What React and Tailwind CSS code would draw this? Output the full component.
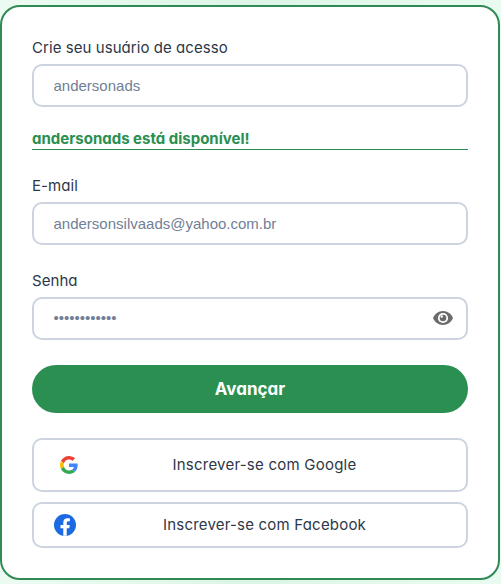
import React from "react";

const label = "block h-6 text-[15px] leading-6 tracking-[0.06px] text-[#2d3748]";
const input =
  "block h-[43px] w-full rounded-[10px] border-2 border-[#cdd4e0] bg-white pr-5 pl-[19.5px] font-['Liberation_Sans',Arial,sans-serif] text-[15px] text-[#718096] outline-none";

function EyeIcon() {
  return (
    <svg className="mb-0.5 h-[14px] w-5" viewBox="0 0 20 14" fill="none">
      <path d="M10 0C5.200 0 1.700 3 0 7c1.700 4 5.200 7 10 7s8.300-3 10-7c-1.700-4-5.200-7-10-7Z" fill="#6b6b6b" />
      <circle cx="10" cy="7" r="5.100" fill="#fff" />
      <circle cx="10" cy="7" r="3.300" fill="#6b6b6b" />
      <circle cx="8.700" cy="5.500" r="1.200" fill="#fff" />
    </svg>
  );
}

function GoogleIcon() {
  return (
    <svg className="size-[18px]" viewBox="0 0 48 48">
      <path fill="#EA4335" d="M24 9.5c3.540 0 6.710 1.220 9.210 3.600l6.850-6.850C35.900 2.380 30.470 0 24 0 14.620 0 6.510 5.380 2.560 13.220l7.980 6.190C12.430 13.720 17.740 9.500 24 9.500z" />
      <path fill="#4285F4" d="M46.980 24.550c0-1.570-.150-3.090-.380-4.550H24v9.020h12.940c-.580 2.960-2.260 5.480-4.780 7.180l7.730 6c4.510-4.180 7.090-10.360 7.090-17.650z" />
      <path fill="#FBBC05" d="M10.530 28.590c-.480-1.450-.760-2.990-.760-4.590s.270-3.140.760-4.590l-7.980-6.190C.920 16.460 0 20.120 0 24c0 3.880.920 7.540 2.560 10.780l7.970-6.190z" />
      <path fill="#34A853" d="M24 48c6.480 0 11.930-2.130 15.890-5.810l-7.730-6c-2.150 1.450-4.920 2.300-8.160 2.300-6.260 0-11.570-4.220-13.470-9.910l-7.980 6.190C6.510 42.620 14.620 48 24 48z" />
    </svg>
  );
}

function FacebookIcon() {
  return (
    <svg className="size-[22px]" viewBox="0 0 24 24">
      <circle cx="12" cy="12" r="12" fill="#1b6ae4" />
      <path fill="#fff" d="M10.125 23.860v-8.390H7.080V12h3.050V9.360c0-3.010 1.790-4.670 4.530-4.670 1.310 0 2.680.240 2.680.240v2.950h-1.510c-1.490 0-1.960.930-1.960 1.870V12h3.330l-.530 3.470h-2.800v8.390z" />
    </svg>
  );
}

export default function App() {
  return (
    <div className="h-[584px] w-[501px] bg-linear-to-r from-[#ecfbf2] via-[#dcf5e6] to-[#e9fbf0] pt-[5px] font-[Inter,'Open_Sans',sans-serif] [font-feature-settings:'cv11']">
      <form className="h-[575px] w-[500px] rounded-[20px] border-2 border-[#2f8a55] bg-white px-[30px] pt-[29px]">
        <label className={label} htmlFor="user">Crie seu usuário de acesso</label>
        <input id="user" className={input + " mt-[4px]"} defaultValue="andersonads" />
        <p className="mt-5 h-[23px] border-b border-solid border-b-[#2f8a55] text-[15px] leading-6 font-bold text-[#2a8f50]">
          andersonads está disponível!
        </p>

        <label className={label + " mt-6"} htmlFor="mail">E-mail</label>
        <input id="mail" className={input + " mt-[4px]"} defaultValue="andersonsilvaads@yahoo.com.br" />

        <label className={label + " mt-6"} htmlFor="pass">Senha</label>
        <div className="mt-[4px] flex h-[43px] items-center justify-between rounded-[10px] border-2 border-[#cdd4e0] pr-[13px] pl-[19.5px] font-['Liberation_Sans',Arial,sans-serif] text-[15px] text-[#718096]">
          <input id="pass" type="password" className="w-60 outline-none" defaultValue="andersonads1" />
          <EyeIcon />
        </div>

        <button type="button" className="mt-[25px] h-12 w-full rounded-full bg-[#2a8f50] pt-px text-[17px] font-bold text-white">
          Avançar
        </button>
        <button type="button" className="mt-[25px] flex h-[54px] w-full items-center rounded-[10px] border-2 border-[#cdd4e0] pl-[26px] text-[15px] tracking-[0.23px] text-[#2d3748]">
          <GoogleIcon />
          <span className="ml-[94.5px] whitespace-nowrap">Inscrever-se com Google</span>
        </button>
        <button type="button" className="mt-[10px] flex h-[46px] w-full items-center rounded-[10px] border-2 border-[#cdd4e0] pl-5 text-[15px] tracking-[0.2px] text-[#2d3748]">
          <FacebookIcon />
          <span className="ml-[87px] whitespace-nowrap">Inscrever-se com Facebook</span>
        </button>
      </form>
    </div>
  );
}
